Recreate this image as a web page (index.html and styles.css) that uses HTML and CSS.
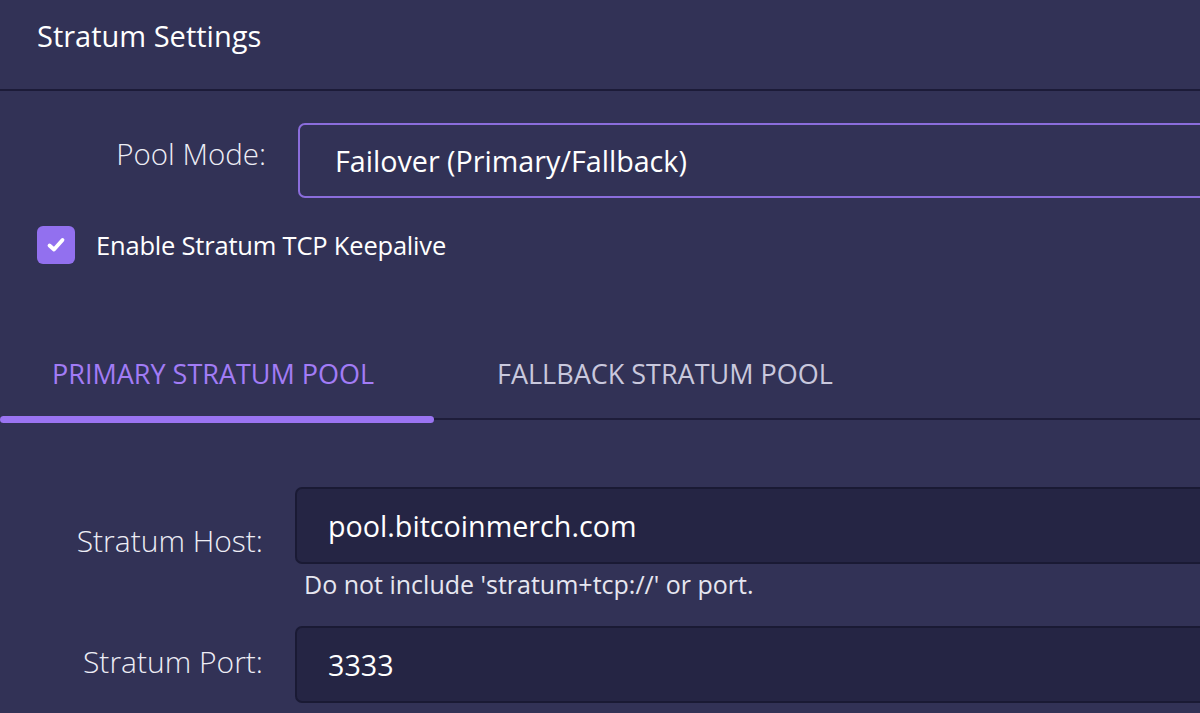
FILE: index.html
```html
<!DOCTYPE html>
<html lang="en">
<head>
    <meta charset="UTF-8">
    <title>Stratum Settings</title>
    <link rel="stylesheet" href="styles.css">
</head>
<body>
<div class="panel">
    <div class="panel-header">
        <h2>Stratum Settings</h2>
    </div>
    <div class="panel-body">
        <div class="form-row mode-row">
            <label class="form-label">Pool Mode:</label>
            <div class="select-box">Failover (Primary/Fallback)</div>
        </div>
        <div class="check-row">
            <span class="check-box">
                <svg width="22" height="18" viewBox="0 0 22 18"><path d="M4.5 9.5l4.5 4 8.5-9.5" fill="none" stroke="#fff" stroke-width="3.8" stroke-linecap="round" stroke-linejoin="round"/></svg>
            </span>
            <span class="check-label">Enable Stratum TCP Keepalive</span>
        </div>
        <ul class="tabs">
            <li class="tab active">PRIMARY STRATUM POOL</li>
            <li class="tab">FALLBACK STRATUM POOL</li>
        </ul>
        <div class="tab-body">
            <div class="form-row">
                <label class="form-label">Stratum Host:</label>
                <div class="field">
                    <div class="text-input">pool.bitcoinmerch.com</div>
                    <p class="help">Do not include 'stratum+tcp://' or port.</p>
                </div>
            </div>
            <div class="form-row">
                <label class="form-label">Stratum Port:</label>
                <div class="field">
                    <div class="text-input">3333</div>
                </div>
            </div>
        </div>
    </div>
</div>
</body>
</html>
```

FILE: styles.css
```css
*{
    padding:0;
    margin:0;
    box-sizing: border-box;
}
ul{
    list-style: none;
}
html,body{
    height: 100%;
    background-color: #323256;
    overflow: hidden;
}
body{
    font-family: "Open Sans", "Noto Sans", sans-serif;
    color: #fff;
}
.panel-header{
    height: 91px;
    padding: 17px 37px 0;
    border-bottom: 2px solid #1c1b38;
}
.panel-header h2{
    font-size: 29px;
    font-weight: 400;
    line-height: 38px;
}
.panel-body{
    padding-top: 32px;
}
.form-row{
    display: flex;
    align-items: center;
}
.form-label{
    width: 263px;
    flex-shrink: 0;
    text-align: right;
    font-size: 30px;
    font-weight: 300;
    color: #ededf5;
}
.mode-row{
    align-items: flex-start;
}
.mode-row .form-label{
    width: 266px;
    font-size: 29.5px;
    line-height: 62px;
}
.select-box{
    flex: 1;
    margin-left: 32px;
    margin-right: -10px;
    height: 75px;
    padding-left: 35px;
    border: 2px solid #8b6ddc;
    border-radius: 7px;
    font-size: 28.7px;
    font-weight: 500;
    line-height: 71px;
}
.check-row{
    display: flex;
    align-items: center;
    padding-left: 37px;
    margin-top: 28px;
    height: 38px;
}
.check-box{
    width: 38px;
    height: 38px;
    border-radius: 6px;
    background-color: #9270ef;
    display: flex;
    align-items: center;
    justify-content: center;
}
.check-label{
    margin-left: 21px;
    font-size: 25.5px;
    font-weight: 500;
    letter-spacing: -0.2px;
}
.tabs{
    display: flex;
    margin-top: 75px;
    border-bottom: 2px solid #1e1d3a;
}
.tab{
    position: relative;
    width: 434px;
    height: 79px;
    padding-left: 52px;
    font-size: 27px;
    font-weight: 500;
    line-height: 70px;
    color: #c9c8dd;
}
.tab + .tab{
    padding-left: 63px;
}
.tab.active{
    color: #a27cf6;
}
.tab.active::after{
    content: "";
    position: absolute;
    left: 0;
    right: 0;
    bottom: -5px;
    height: 7px;
    border-radius: 4px;
    background-color: #9a74f2;
}
.tab-body{
    padding-top: 67px;
}
.tab-body .form-row + .form-row{
    margin-top: 24px;
}
.tab-body .form-label{
    padding-bottom: 8px;
}
.tab-body .form-row + .form-row .form-label{
    padding-bottom: 6px;
}
.field{
    flex: 1;
    margin-left: 32px;
    margin-right: -10px;
}
.text-input{
    height: 77px;
    padding-left: 31px;
    background-color: #252544;
    border: 2px solid #1a1a34;
    border-radius: 7px;
    font-size: 28.7px;
    font-weight: 500;
    line-height: 73px;
}
.help{
    padding-left: 9px;
    margin-top: 3px;
    font-size: 25px;
    line-height: 35px;
    color: #e6e6f0;
}
```
